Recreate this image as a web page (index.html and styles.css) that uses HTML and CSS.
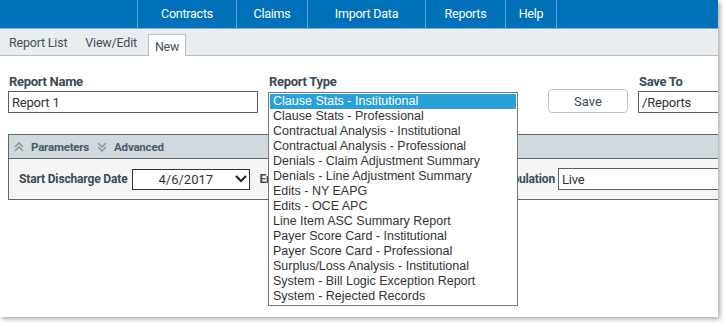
FILE: index.html
```html
<!DOCTYPE html>
<html>
<head>
<meta charset="utf-8">
<link rel="stylesheet" href="styles.css">
</head>
<body>
<div class="page">
  <nav class="topnav">
    <a class="nav-item w-contracts">Contracts</a>
    <a class="nav-item w-claims">Claims</a>
    <a class="nav-item w-import">Import Data</a>
    <a class="nav-item w-reports">Reports</a>
    <a class="nav-item w-help last">Help</a>
  </nav>
  <div class="tabbar">
    <span class="tab">Report List</span>
    <span class="tab">View/Edit</span>
    <span class="tab active">New</span>
  </div>
  <div class="content">
    <div class="form-row">
      <div class="field name-field">
        <label class="lbl">Report Name</label>
        <input class="txt" type="text" value="Report 1">
      </div>
      <div class="field type-field">
        <label class="lbl">Report Type</label>
      </div>
      <div class="field save-field">
        <button class="btn">Save</button>
      </div>
      <div class="field to-field">
        <label class="lbl">Save To</label>
        <input class="txt" type="text" value="/Reports">
      </div>
    </div>
    <div class="panel">
      <div class="panel-head">
        <svg class="chev" width="10" height="12" viewBox="0 0 10 12"><path d="M1 6 L5 2 L9 6 M1 10 L5 6 L9 10" fill="none" stroke="#8a979f" stroke-width="1.6"/></svg>
        <span class="ph-txt">Parameters</span>
        <svg class="chev" width="10" height="12" viewBox="0 0 10 12"><path d="M1 2 L5 6 L9 2 M1 6 L5 10 L9 6" fill="none" stroke="#8a979f" stroke-width="1.6"/></svg>
        <span class="ph-txt">Advanced</span>
      </div>
      <div class="panel-body">
        <label class="plbl">Start Discharge Date</label>
        <div class="dsel"><span>4/6/2017</span><svg width="12" height="8" viewBox="0 0 12 8"><path d="M1 1 L6 6 L11 1" fill="none" stroke="#222" stroke-width="2"/></svg></div>
        <label class="plbl end-lbl">End Discharge Date</label>
        <label class="plbl pop-lbl">Population</label>
        <input class="txt live" type="text" value="Live">
      </div>
    </div>
  </div>
  <ul class="listbox">
    <li class="sel">Clause Stats - Institutional</li>
    <li>Clause Stats - Professional</li>
    <li>Contractual Analysis - Institutional</li>
    <li>Contractual Analysis - Professional</li>
    <li>Denials - Claim Adjustment Summary</li>
    <li>Denials - Line Adjustment Summary</li>
    <li>Edits - NY EAPG</li>
    <li>Edits - OCE APC</li>
    <li>Line Item ASC Summary Report</li>
    <li>Payer Score Card - Institutional</li>
    <li>Payer Score Card - Professional</li>
    <li>Surplus/Loss Analysis - Institutional</li>
    <li>System - Bill Logic Exception Report</li>
    <li>System - Rejected Records</li>
  </ul>
</div>
</body>
</html>
```
FILE: styles.css
```css
* { box-sizing: border-box; }
html, body { margin: 0; padding: 0; background: #fff; }
body { width: 728px; height: 327px; overflow: hidden; font-family: Roboto, "Liberation Sans", sans-serif; }
.page {
  position: relative;
  width: 718px;
  height: 317px;
  background: #fff;
  overflow: hidden;
  box-shadow: 2px 2px 5px rgba(0,0,0,0.35);
}
.topnav {
  display: flex;
  height: 29px;
  background: #0071b9;
  border-bottom: 1px solid #6fb3e6;
  padding-left: 137px;
}
.nav-item {
  display: flex;
  align-items: center;
  justify-content: center;
  flex-shrink: 0;
  color: #fff;
  font-size: 12.5px;
  padding-bottom: 1px;
  border-left: 1px solid #5aa6e0;
  letter-spacing: -0.25px;
}
.w-contracts { width: 99px; }
.w-claims { width: 71px; }
.w-import { width: 118px; }
.w-reports { width: 80px; }
.w-help { width: 52px; }
.nav-item.last { border-right: 1px solid #5aa6e0; }
.tabbar {
  display: flex;
  align-items: flex-end;
  height: 27px;
  background: #e9edf0;
  border-bottom: 1px solid #b4c0c6;
  padding-left: 9px;
}
.tab {
  font-size: 12.5px;
  color: #3f4f5a;
  padding: 0 9px 5px 0;
  margin-right: 9px;
  letter-spacing: -0.2px;
  line-height: 14px;
}
.tab.active {
  background: #fff;
  border: 1px solid #b4c0c6;
  border-bottom: none;
  height: 22px;
  padding: 5px 6px 0 6px;
  margin-bottom: -1px;
  margin-left: -7px;
}
.content { padding: 18px 0 0 8px; }
.form-row { display: flex; }
.field { display: flex; flex-direction: column; flex-shrink: 0; }
.lbl {
  font-size: 13px;
  font-weight: 700;
  color: #3b4a55;
  height: 17px;
  line-height: 16px;
  padding-left: 1px;
  letter-spacing: -0.3px;
}
.txt {
  font-family: Roboto, "Liberation Sans", sans-serif;
  font-size: 13px;
  color: #333;
  border: 1px solid #5a6066;
  height: 22px;
  padding: 0 3px;
  margin: 0;
  background: #fff;
  outline: none;
  letter-spacing: -0.2px;
}
.name-field { width: 260px; }
.name-field .txt { width: 250px; }
.type-field { width: 280px; }
.save-field { width: 90px; padding-top: 15px; }
.btn {
  width: 80px;
  height: 24px;
  border: 1px solid #b8c3c8;
  border-radius: 4px;
  background: #fff;
  font-family: Roboto, "Liberation Sans", sans-serif;
  font-size: 13px;
  color: #3b4a55;
  padding: 0;
}
.to-field .txt { width: 100px; }
.panel {
  margin-top: 21px;
  width: 720px;
  border: 1px solid #666;
  border-right: none;
  background: #f5f5f5;
}
.panel-head {
  display: flex;
  align-items: center;
  height: 24px;
  background: #d0d9de;
  border-bottom: 1px solid #666;
  padding-left: 5px;
}
.chev { margin-right: 7px; }
.ph-txt {
  font-size: 11.5px;
  font-weight: 700;
  color: #4a5a65;
  margin-right: 8px;
  letter-spacing: -0.2px;
}
.panel-body {
  display: flex;
  align-items: center;
  height: 40px;
  padding-left: 10px;
}
.plbl {
  font-size: 12px;
  font-weight: 700;
  color: #3b4a55;
  letter-spacing: -0.15px;
  white-space: nowrap;
}
.dsel {
  display: flex;
  align-items: center;
  justify-content: space-between;
  width: 119px;
  height: 21px;
  margin-left: 4px;
  border: 1px solid #333;
  background: #fff;
  padding: 0 2px 0 26px;
  font-size: 13px;
  color: #333;
}
.end-lbl { margin-left: 10px; width: 200px; overflow: hidden; }
.pop-lbl { margin-left: 41px; }
.live { margin-left: 3px; width: 170px; height: 22px; }
.listbox {
  position: absolute;
  left: 268px;
  top: 92px;
  width: 250px;
  height: 214px;
  margin: 0;
  padding: 1px 0 0 0;
  list-style: none;
  background: #fff;
  border: 1px solid #777;
  font-family: "Liberation Sans", Arial, sans-serif;
  font-size: 12.5px;
  color: #333;
}
.listbox li {
  height: 15px;
  line-height: 15px;
  padding-left: 4px;
  white-space: nowrap;
}
.listbox li.sel { background: #2a9fd8; color: #fff; margin: 0 1px; padding-left: 3px; }
```
